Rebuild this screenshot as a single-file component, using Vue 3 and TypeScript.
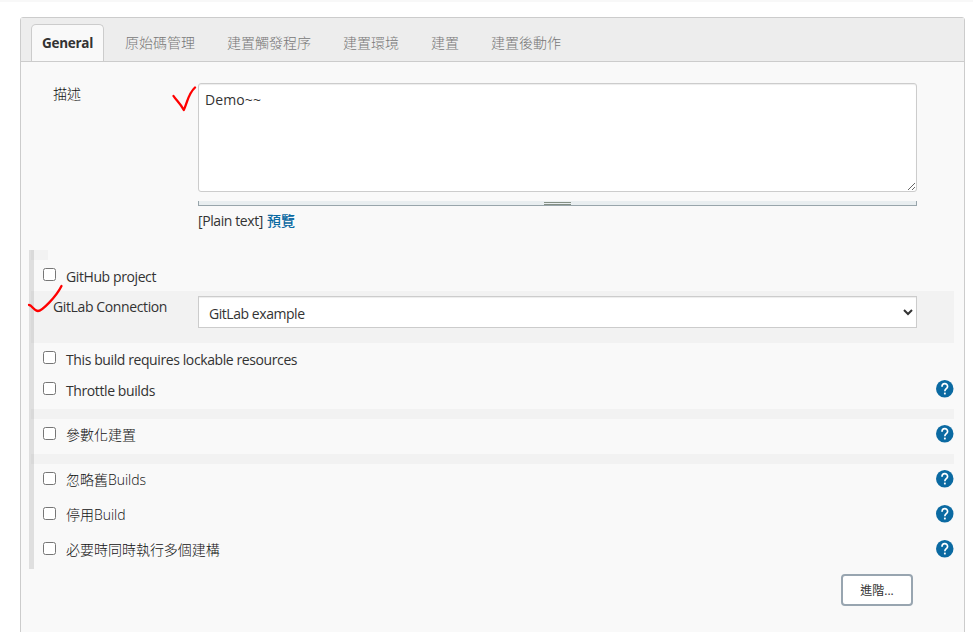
<script setup lang="ts">
import { ref } from 'vue'

interface Option {
  label: string
  kind: string
  help: boolean
}

const tabs: string[] = ['General', '原始碼管理', '建置觸發程序', '建置環境', '建置', '建置後動作']
const activeTab = ref('General')
const description = ref('Demo~~')
const connection = ref('GitLab example')

const sourceOptions: Option[] = [
  { label: 'This build requires lockable resources', kind: 'short resources', help: false },
  { label: 'Throttle builds', kind: 'throttle', help: true },
]
const parameterOptions: Option[] = [{ label: '參數化建置', kind: 'cjk', help: true }]
const buildOptions: Option[] = [
  { label: '忽略舊Builds', kind: 'cjk', help: true },
  { label: '停用Build', kind: 'cjk', help: true },
  { label: '必要時同時執行多個建構', kind: 'cjk', help: true },
]
const groups: Option[][] = [sourceOptions, parameterOptions, buildOptions]
</script>

<template>
  <div class="page">
    <div class="topline"></div>
    <main class="panel">
      <nav class="tabs">
        <button
          v-for="tab in tabs"
          :key="tab"
          type="button"
          class="tab"
          :class="{ active: tab === activeTab }"
          @click="activeTab = tab"
        >{{ tab }}</button>
      </nav>

      <section class="description">
        <label class="name" for="description">描述</label>
        <div class="field">
          <textarea id="description" v-model="description" spellcheck="false"></textarea>
          <div class="handle"><span class="grip"></span></div>
          <div class="format"><span class="plain">[Plain text]</span><a class="preview">預覽</a></div>
        </div>
        <svg class="mark mark-description" viewBox="0 0 26 28">
          <path d="M2.500 10 C5 14 9 17 12.800 24 C17 15 17 8 24 1.500" />
        </svg>
      </section>

      <section class="options">
        <div class="stub"></div>
        <div class="option short">
          <input id="github" type="checkbox" />
          <label class="text" for="github">GitHub project</label>
        </div>
        <div class="connection">
          <label class="name" for="connection">GitLab Connection</label>
          <select id="connection" v-model="connection">
            <option>GitLab example</option>
          </select>
        </div>
        <div v-for="(group, g) in groups" :key="g" class="group">
          <div v-for="item in group" :key="item.label" class="option" :class="item.kind">
            <input :id="item.label" type="checkbox" />
            <label class="text" :for="item.label">{{ item.label }}</label>
            <svg v-if="item.help" class="help" viewBox="0 0 24 24">
              <circle cx="12" cy="12" r="12" />
              <path d="M8.200 9.100 C8.200 3.700 15.900 3.700 15.900 8.900 C15.900 11.800 12.100 12 12.100 15.300" />
              <rect x="10.900" y="17.300" width="2.500" height="2.500" />
            </svg>
          </div>
        </div>
        <div class="rail"></div>
        <svg class="mark mark-connection" viewBox="0 0 38 32">
          <path d="M2 22 C5 22 7 28 11 28 C15 28 29 14 34.500 3" />
        </svg>
      </section>

      <footer class="actions"><button type="button" class="advanced">進階...</button></footer>
    </main>
  </div>
</template>

<style>
body {
  margin: 0;
  background: #fff;
  overflow: hidden;
}
</style>

<style scoped>
* {
  box-sizing: border-box;
}
.page {
  height: 632px;
  overflow: hidden;
  font-family: "Open Sans", "Noto Sans CJK TC", sans-serif;
  font-size: 14px;
  line-height: 20px;
  color: #333;
}
.topline {
  height: 2px;
  background: #f8f8f8;
}
.panel {
  width: 945px;
  height: 640px;
  margin: 15px 0 0 20px;
  border: 1px solid #ccc;
  border-radius: 3px;
  background: #f9f9f9;
}
.tabs {
  display: flex;
  align-items: flex-end;
  height: 44px;
  padding-left: 10px;
  border-bottom: 1px solid #ccc;
  background: #ededed;
}
.tab {
  height: 37px;
  margin: 0;
  padding: 0 16px;
  border: 0;
  background: none;
  font: inherit;
  font-weight: 300;
  color: #777;
  white-space: nowrap;
}
.tab.active {
  width: 73px;
  margin: 0 5px 0 0;
  padding: 0 0 1px;
  border: 1px solid #ccc;
  border-bottom: 0;
  border-radius: 5px 5px 0 0;
  background: #f9f9f9;
  font-weight: 700;
  font-size: 13.500px;
  letter-spacing: -0.300px;
  color: #333;
}
.description {
  position: relative;
  display: flex;
  height: 188px;
  padding: 21px 0 0 32px;
}
.name {
  width: 145px;
  flex: none;
}
.description .name {
  font-weight: 300;
  padding-top: 1px;
  color: #111;
}
.field {
  width: 719px;
}
textarea {
  display: block;
  width: 719px;
  height: 109px;
  margin: 0;
  padding: 6px 6px;
  border: 1px solid #ccc;
  border-radius: 3px;
  outline: 0;
  background: #fff;
  box-shadow: inset 0 1px 1px rgba(0, 0, 0, 0.075);
  color: #333;
  font: inherit;
  letter-spacing: 0.100px;
}
.handle {
  display: flex;
  justify-content: center;
  height: 5px;
  margin-top: 9px;
  border: 1px solid #98a5ab;
  border-top: 0;
  background: #e9eef0;
}
.grip {
  width: 27px;
  height: 3px;
  margin-top: 1px;
  border: solid #848f84;
  border-width: 1px 0;
}
.format {
  display: flex;
  gap: 4px;
  margin-top: 5px;
}
.plain {
  letter-spacing: -0.400px;
}
.preview {
  color: #0b6aa2;
  font-weight: 500;
}
.mark {
  position: absolute;
  fill: none;
  stroke: #f00;
  stroke-width: 2.300;
  stroke-linecap: round;
  stroke-linejoin: round;
}
.mark-description {
  left: 150px;
  top: 24px;
  width: 26px;
  height: 28px;
}
.mark-connection {
  left: -4px;
  top: 33px;
  width: 38px;
  height: 32px;
}
.options {
  position: relative;
  width: 923px;
  margin-left: 10px;
}
.rail {
  position: absolute;
  left: -2px;
  top: 0;
  bottom: 0;
  width: 5px;
  background: rgba(0, 0, 0, 0.1);
}
.stub {
  width: 17px;
  height: 10px;
  background: #f2f2f2;
}
.option {
  display: flex;
  align-items: flex-start;
  height: 35px;
  padding: 6px 0 0 12px;
}
.option.short,
.option.resources {
  height: 31px;
}
.option input {
  width: 13px;
  height: 13px;
  margin: 2px 10px 0 0;
}
.text {
  padding-top: 1px;
  letter-spacing: -0.400px;
}
.cjk .text {
  padding-top: 0;
  font-weight: 300;
  letter-spacing: -0.020px;
  color: #111;
}
.help {
  width: 17.500px;
  height: 17.500px;
  margin: 0.250px 0.250px 0 auto;
  fill: #0b6aa2;
}
.help path {
  fill: none;
  stroke: #fff;
  stroke-width: 2.300;
}
.help rect {
  fill: #fff;
}
.connection {
  display: flex;
  height: 52px;
  padding: 5px 0 0 22px;
  background: #f2f2f2;
}
.connection .name {
  padding-top: 1px;
  letter-spacing: -0.380px;
}
select {
  width: 719px;
  height: 32px;
  margin: 0;
  padding: 3px 1px 0 6px;
  border: 1px solid #ccc;
  border-radius: 0;
  background: #fff;
  box-shadow: inset 0 1px 1px rgba(0, 0, 0, 0.075);
  color: #333;
  font: inherit;
  letter-spacing: -0.450px;
}
.group + .group {
  border-top: 10px solid #f2f2f2;
}
.actions {
  display: flex;
  justify-content: flex-end;
  padding: 5px 51px 0 0;
}
.advanced {
  width: 72px;
  height: 32px;
  padding: 2px 0 0;
  border: 2px solid #98a5b0;
  border-radius: 4px;
  background: #fff;
  color: #333;
  font: inherit;
  font-size: 12px;
}
</style>
